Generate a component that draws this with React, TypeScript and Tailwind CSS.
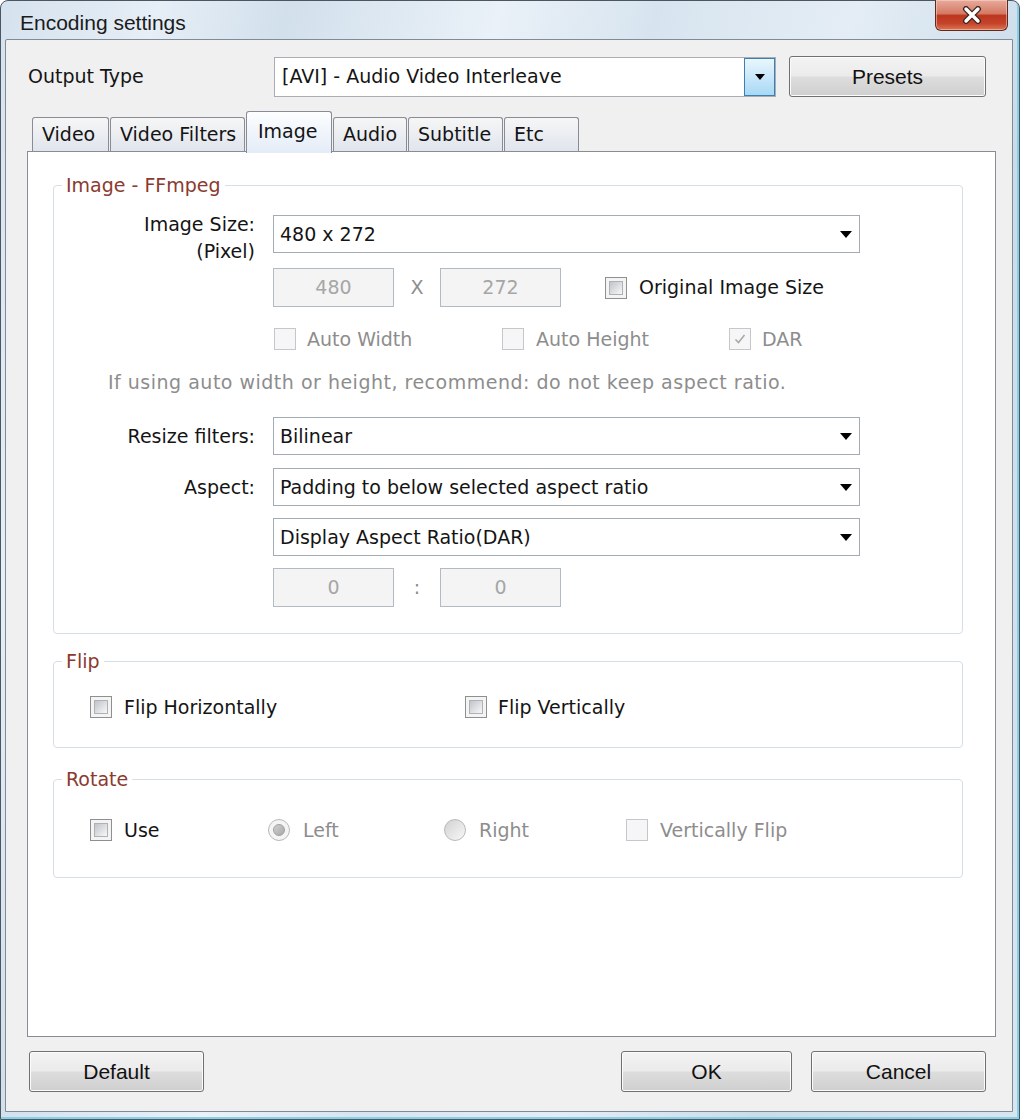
import React from 'react'

type BoxProps = { checked?: boolean; disabled?: boolean }

function CheckBox({ checked = false, disabled = false }: BoxProps) {
  return (
    <span
      className={
        disabled
          ? 'flex h-[22px] w-[22px] shrink-0 items-center justify-center border border-[#c4c8cc] bg-[#f6f6f6]'
          : 'flex h-[22px] w-[22px] shrink-0 items-center justify-center border border-[#8e8f8f] bg-[#f4f4f4] p-[3px]'
      }
    >
      {!disabled && (
        <span className="h-full w-full border border-[#aeb2b7] bg-gradient-to-br from-[#c0c4c9] to-[#f8f8f8]" />
      )}
      {checked && (
        <svg width="14" height="14" viewBox="0 0 14 14">
          <path d="M2.5 7.5 L5.5 10.5 L11.5 3" fill="none" stroke="#a9a9a9" strokeWidth="1.6" />
        </svg>
      )}
    </span>
  )
}

function Radio({ checked = false }: { checked?: boolean }) {
  if (checked) {
    return (
      <span className="flex h-[22px] w-[22px] shrink-0 items-center justify-center rounded-full border border-[#b9b9b9] bg-[#f4f4f4]">
        <span className="h-[12px] w-[12px] rounded-full border border-[#a0a0a0] bg-gradient-to-br from-[#d0d0d0] to-[#a8a8a8]" />
      </span>
    )
  }
  return (
    <span className="h-[22px] w-[22px] shrink-0 rounded-full border border-[#b9b9b9] bg-gradient-to-br from-[#d2d2d2] to-[#f8f8f8]" />
  )
}

function Arrow() {
  return (
    <svg width="12" height="7" viewBox="0 0 12 7">
      <path d="M0 0h12L6 7z" fill="#000" />
    </svg>
  )
}

function Combo({ value }: { value: string }) {
  return (
    <div className="flex h-[38px] w-[587px] items-center border border-[#a3abb5] bg-white pl-[6px] pr-[7px]">
      <span className="flex-1 leading-none">{value}</span>
      <Arrow />
    </div>
  )
}

function Field({ value }: { value: string }) {
  return (
    <div className="flex h-[39px] w-[121px] items-center justify-center border border-[#b2bac3] bg-[#f4f4f4] text-[#a6a6a6]">
      {value}
    </div>
  )
}

function Button({ label, width }: { label: string; width: string }) {
  return (
    <button
      className={`${width} flex h-[41px] items-center justify-center rounded-[3px] border border-[#707070] bg-[linear-gradient(180deg,#f3f3f3_0%,#ebebeb_48%,#dddddd_52%,#cfcfcf_100%)] font-['Liberation_Sans',sans-serif] text-[21px] text-[#111] shadow-[inset_0_0_0_1px_#fcfcfc]`}
    >
      {label}
    </button>
  )
}

function Tab({ label, width, active = false }: { label: string; width: string; active?: boolean }) {
  if (active) {
    return (
      <div
        className={`${width} relative z-10 -mb-[2px] flex h-[42px] items-center rounded-t-[3px] border border-b-0 border-[#898c95] bg-gradient-to-b from-[#fdfeff] to-[#e3ecf7] pb-[2px] pl-[11px]`}
      >
        {label}
      </div>
    )
  }
  return (
    <div
      className={`${width} flex h-[34px] items-center rounded-t-[3px] border border-b-0 border-[#898c95] bg-gradient-to-b from-[#f6f6f6] to-[#e0e5ed] pl-[9px]`}
    >
      {label}
    </div>
  )
}

function Group({ title, className, children }: { title: string; className: string; children: React.ReactNode }) {
  return (
    <fieldset className={`${className} ml-[25px] w-[910px] rounded-[4px] border border-[#d5dfe5]`}>
      <legend className="ml-[8px] px-[4px] leading-[22px] text-[#8b3a2f]">{title}</legend>
      {children}
    </fieldset>
  )
}

export default function App() {
  return (
    <div className="h-[1120px] w-[1020px] overflow-hidden bg-white font-['DejaVu_Sans',sans-serif] text-[19px] text-[#141414]">
      <div className="flex h-full w-full flex-col rounded-t-[8px] border border-[#4b5661] bg-[linear-gradient(105deg,#d5e2ee_0%,#e6eef6_12%,#d2e0ec_22%,#eaf1f8_38%,#d7e4ef_50%,#e4edf5_65%,#cbdce9_80%,#d9e6f0_100%)] shadow-[inset_-2px_-2px_0_#86cfe4]">
        {/* title bar */}
        <div className="flex h-[38px] shrink-0 items-start">
          <span className="mt-[9px] ml-[19px] font-['Liberation_Sans',sans-serif] text-[21px] leading-[26px] text-[#1b1b1b]">
            Encoding settings
          </span>
          <div className="-mt-px mr-[11px] ml-auto flex h-[31px] w-[73px] items-center justify-center rounded-b-[6px] border border-t-0 border-[#5d2a20] bg-[linear-gradient(180deg,#e8ab9c_0%,#d47a64_45%,#bd361e_52%,#c4432a_78%,#dc7752_100%)] shadow-[inset_0_0_0_1px_rgba(255,220,210,0.5)]">
            <svg width="24" height="18" viewBox="0 0 24 18">
              <path d="M6 3 L18 15 M18 3 L6 15" stroke="#3a2622" strokeWidth="6" strokeLinecap="round" />
              <path d="M6 3 L18 15 M18 3 L6 15" stroke="#ffffff" strokeWidth="3.4" strokeLinecap="round" />
            </svg>
          </div>
        </div>

        {/* client area */}
        <div className="mr-[6px] mb-[7px] ml-[4px] flex flex-1 flex-col rounded-tl-[2px] border border-[#7e8c99] bg-[#f0f0f0]">
          <div className="mt-[16px] flex items-center pl-[22px]">
            <span className="w-[246px]">Output Type</span>
            <div className="flex h-[40px] w-[502px] items-center border border-[#abadb3] bg-white pl-[7px]">
              <span className="flex-1">[AVI] - Audio Video Interleave</span>
              <div className="flex h-full w-[31px] items-center justify-center border border-[#3c7fb1] bg-gradient-to-b from-[#eaf6fd] to-[#a7d9f5]">
                <svg width="10" height="6" viewBox="0 0 10 6">
                  <path d="M0 0h10L5 6z" fill="#000" />
                </svg>
              </div>
            </div>
            <div className="ml-[13px]">
              <Button label="Presets" width="w-[197px]" />
            </div>
          </div>

          {/* tabs */}
          <div className="mt-[14px] flex h-[40px] items-end gap-[1px] pl-[26px]">
            <Tab label="Video" width="w-[77px]" />
            <Tab label="Video Filters" width="w-[135px]" />
            <Tab label="Image" width="w-[86px]" active />
            <Tab label="Audio" width="w-[74px]" />
            <Tab label="Subtitle" width="w-[95px]" />
            <Tab label="Etc" width="w-[75px]" />
          </div>

          {/* tab panel */}
          <div className="ml-[21px] h-[886px] w-[969px] border border-[#898c95] bg-white">
            <Group title="Image - FFmpeg" className="mt-[22px] pb-[26px]">
              <div className="mt-[19px] flex h-[38px]">
                <div className="-mt-[4px] flex w-[201px] flex-col items-end self-start leading-[27px]">
                  <span>Image Size:</span>
                  <span>(Pixel)</span>
                </div>
                <div className="ml-[18px]">
                  <Combo value="480 x 272" />
                </div>
              </div>

              <div className="mt-[15px] flex items-center pl-[219px]">
                <Field value="480" />
                <span className="w-[46px] text-center text-[#8d8d8d]">X</span>
                <Field value="272" />
                <div className="ml-[44px] flex items-center gap-[12px]">
                  <CheckBox />
                  <span>Original Image Size</span>
                </div>
              </div>

              <div className="mt-[21px] flex h-[22px] items-center pl-[220px] text-[#8d8d8d]">
                <div className="flex w-[228px] items-center gap-[11px]">
                  <CheckBox disabled />
                  <span>Auto Width</span>
                </div>
                <div className="flex w-[227px] items-center gap-[12px]">
                  <CheckBox disabled />
                  <span>Auto Height</span>
                </div>
                <div className="flex items-center gap-[11px]">
                  <CheckBox disabled checked />
                  <span>DAR</span>
                </div>
              </div>

              <p className="mt-[21px] pl-[54px] leading-[22px] tracking-[0.5px] text-[#8d8d8d]">
                If using auto width or height, recommend: do not keep aspect ratio.
              </p>

              <div className="mt-[24px] flex items-center">
                <span className="w-[201px] text-right">Resize filters:</span>
                <div className="ml-[18px]">
                  <Combo value="Bilinear" />
                </div>
              </div>
              <div className="mt-[13px] flex items-center">
                <span className="w-[201px] text-right">Aspect:</span>
                <div className="ml-[18px]">
                  <Combo value="Padding to below selected aspect ratio" />
                </div>
              </div>
              <div className="mt-[12px] pl-[219px]">
                <Combo value="Display Aspect Ratio(DAR)" />
              </div>
              <div className="mt-[12px] flex items-center pl-[219px]">
                <Field value="0" />
                <span className="w-[46px] text-center text-[#8d8d8d]">:</span>
                <Field value="0" />
              </div>
            </Group>

            <Group title="Flip" className="mt-[16px] pb-[29px]">
              <div className="mt-[24px] flex h-[22px] items-center pl-[36px]">
                <div className="flex w-[375px] items-center gap-[12px]">
                  <CheckBox />
                  <span>Flip Horizontally</span>
                </div>
                <div className="flex items-center gap-[11px]">
                  <CheckBox />
                  <span>Flip Vertically</span>
                </div>
              </div>
            </Group>

            <Group title="Rotate" className="mt-[20px] pb-[36px]">
              <div className="mt-[29px] flex h-[22px] items-center pl-[36px]">
                <div className="flex w-[178px] items-center gap-[12px]">
                  <CheckBox />
                  <span>Use</span>
                </div>
                <div className="flex w-[176px] items-center gap-[13px] text-[#8d8d8d]">
                  <Radio checked />
                  <span>Left</span>
                </div>
                <div className="flex w-[182px] items-center gap-[13px] text-[#8d8d8d]">
                  <Radio />
                  <span>Right</span>
                </div>
                <div className="flex items-center gap-[12px] text-[#8d8d8d]">
                  <CheckBox disabled />
                  <span>Vertically Flip</span>
                </div>
              </div>
            </Group>
          </div>

          {/* bottom buttons */}
          <div className="mt-[14px] flex items-center pr-[26px] pl-[23px]">
            <Button label="Default" width="w-[175px]" />
            <div className="ml-auto flex gap-[19px]">
              <Button label="OK" width="w-[171px]" />
              <Button label="Cancel" width="w-[175px]" />
            </div>
          </div>
        </div>
      </div>
    </div>
  )
}
